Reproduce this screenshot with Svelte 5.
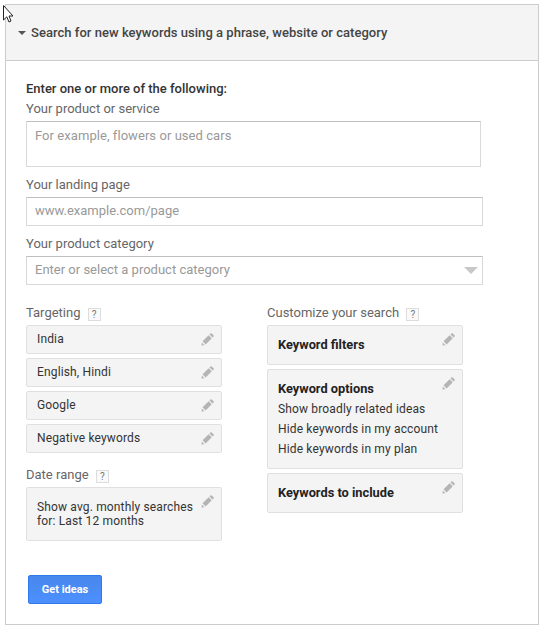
<script>
	const targeting = ['India', 'English, Hindi', 'Google', 'Negative keywords'];
	const pencil = 'M1 11 L0.6 14.4 L4 14 Z M1.8 9.6 L5.4 13.2 L12.4 6.2 L8.8 2.6 Z M9.8 1.6 L13.4 5.2 L14.4 4.2 Q15.2 3.4 14.4 2.6 L12.4 0.6 Q11.6 -0.2 10.8 0.6 Z';
</script>

{#snippet edit()}
	<svg class="pencil" width="13" height="13" viewBox="0 0 15 15"><path d={pencil} /></svg>
{/snippet}

{#snippet help()}
	<span class="help">?</span>
{/snippet}

<div class="page">
	<svg class="cursor" width="13" height="20" viewBox="0 0 13 20">
		<path d="M3.5 2.5 L3.5 17 L6.8 13.8 L9 19 L11 18 L9 13 L13 13 Z" fill="#fff" stroke="#222" stroke-width="1" />
	</svg>
	<section class="panel">
		<header class="panel-header">
			<span class="caret"></span>
			Search for new keywords using a phrase, website or category
		</header>
		<div class="panel-body">
			<div class="intro">Enter one or more of the following:</div>
			<div class="label">Your product or service</div>
			<div class="field area">For example, flowers or used cars</div>
			<div class="label next">Your landing page</div>
			<div class="field wide">www.example.com/page</div>
			<div class="label next">Your product category</div>
			<div class="field wide select">
				Enter or select a product category
				<span class="arrow"></span>
			</div>

			<div class="columns">
				<div class="col">
					<div class="label">Targeting {@render help()}</div>
					<div class="stack">
						{#each targeting as item}
							<div class="card row">{item}{@render edit()}</div>
						{/each}
					</div>
					<div class="label date">Date range {@render help()}</div>
					<div class="card date-card">
						Show avg. monthly searches<br />for: Last 12 months
						{@render edit()}
					</div>
				</div>
				<div class="col">
					<div class="label">Customize your search {@render help()}</div>
					<div class="stack">
						<div class="card tall"><strong>Keyword filters</strong>{@render edit()}</div>
						<div class="card tall options">
							<strong>Keyword options</strong>
							<div>Show broadly related ideas</div>
							<div>Hide keywords in my account</div>
							<div>Hide keywords in my plan</div>
							{@render edit()}
						</div>
						<div class="card tall"><strong>Keywords to include</strong>{@render edit()}</div>
					</div>
				</div>
			</div>

			<button class="ideas">Get ideas</button>
		</div>
	</section>
</div>

<style>
	:global(body) {
		margin: 0;
		background: #fff;
	}

	.page {
		position: relative;
		width: 544px;
		height: 630px;
		padding: 4px 5px 0;
		box-sizing: border-box;
		font-family: Roboto, "Liberation Sans", sans-serif;
		font-size: 13px;
		color: #222;
	}

	.cursor {
		position: absolute;
		top: 3px;
		left: 0;
		z-index: 2;
	}

	.panel {
		width: 534px;
		height: 621px;
		box-sizing: border-box;
		border: 1px solid #ccc;
	}

	.panel-header {
		display: flex;
		align-items: flex-start;
		gap: 5px;
		height: 56px;
		box-sizing: border-box;
		padding: 20px 0 0 12px;
		background: #f4f4f4;
		border-bottom: 1px solid #ccc;
		font-weight: 500;
		letter-spacing: 0.03px;
		color: #444;
		line-height: 15px;
	}

	.caret {
		width: 0;
		height: 0;
		margin-top: 6px;
		border-left: 4px solid transparent;
		border-right: 4px solid transparent;
		border-top: 4px solid #555;
	}

	.panel-body {
		padding: 20px 0 0 20px;
	}

	.intro {
		font-weight: 500;
		color: #333;
		line-height: 15px;
	}

	.label {
		color: #666;
		line-height: 15px;
		margin-top: 5px;
	}

	.label.next {
		margin-top: 10px;
	}

	.field {
		box-sizing: border-box;
		margin-top: 5px;
		padding: 5px 8px;
		border: 1px solid #d9d9d9;
		border-top-color: #c0c0c0;
		color: #999;
		line-height: 15px;
	}

	.area {
		width: 455px;
		height: 46px;
		padding-top: 6px;
		letter-spacing: 0.06px;
	}

	.wide {
		width: 457px;
		height: 29px;
	}

	.select {
		position: relative;
	}

	.arrow {
		position: absolute;
		top: 10px;
		right: 4px;
		width: 0;
		height: 0;
		border-left: 7px solid transparent;
		border-right: 7px solid transparent;
		border-top: 7px solid #c8c8c8;
	}

	.columns {
		display: flex;
		gap: 45px;
		margin-top: 20px;
	}

	.col {
		width: 196px;
	}

	.col > .label:first-child {
		margin-top: 0;
	}

	.help {
		display: inline-block;
		box-sizing: border-box;
		width: 13px;
		height: 13px;
		margin-left: 4px;
		border: 1px solid #ddd;
		background: #fafafa;
		font-size: 10px;
		line-height: 11px;
		text-align: center;
		vertical-align: -1px;
		color: #777;
	}

	.stack {
		display: flex;
		flex-direction: column;
		gap: 4px;
		margin-top: 4px;
	}

	.card {
		position: relative;
		box-sizing: border-box;
		border: 1px solid #e0e0e0;
		border-radius: 2px;
		background: #f4f4f4;
		color: #333;
		font-size: 12px;
		letter-spacing: 0.15px;
	}

	.row {
		height: 29px;
		padding: 6px 10px;
		line-height: 15px;
	}

	.pencil {
		position: absolute;
		top: 7px;
		right: 7px;
		fill: #b4b4b4;
	}

	.tall {
		min-height: 40px;
		padding: 11px 10px;
		line-height: 15px;
	}

	.options {
		height: 100px;
	}

	.options div {
		margin-top: 5px;
	}

	.tall strong {
		font-size: 12.8px;
		font-weight: 700;
		letter-spacing: 0;
		color: #222;
	}

	.label.date {
		margin-top: 14px;
	}

	.date-card {
		height: 54px;
		margin-top: 4px;
		padding: 12px 10px;
		line-height: 14px;
	}

	.ideas {
		display: block;
		width: 74px;
		height: 29px;
		margin: 34px 0 0 2px;
		padding: 0;
		border: 1px solid #3079ed;
		border-radius: 2px;
		background: linear-gradient(#4787ed, #4d90fe);
		color: #fff;
		font-family: inherit;
		font-size: 11px;
		font-weight: 700;
	}
</style>
